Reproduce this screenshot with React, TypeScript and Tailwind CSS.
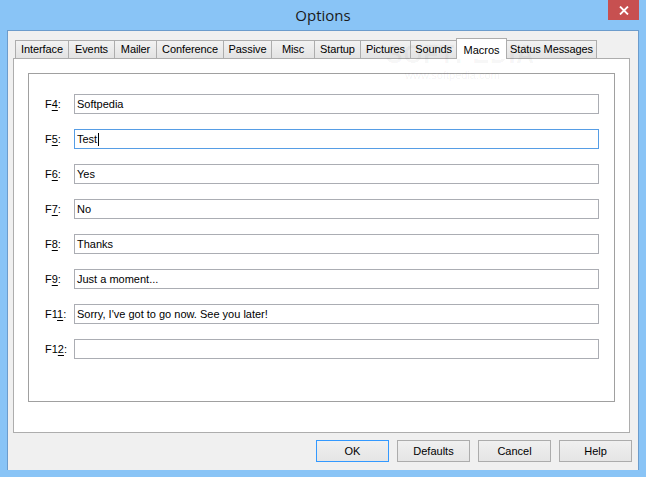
const tabs = [
  { name: "Interface", w: 54 },
  { name: "Events", w: 47 },
  { name: "Mailer", w: 43 },
  { name: "Conference", w: 68 },
  { name: "Passive", w: 49 },
  { name: "Misc", w: 44 },
  { name: "Startup", w: 47 },
  { name: "Pictures", w: 51 },
  { name: "Sounds", w: 47 },
  { name: "Macros", w: 51 },
  { name: "Status Messages", w: 91 },
];

const macros = [
  { key: "F", ul: "4", value: "Softpedia" },
  { key: "F", ul: "5", value: "Test", focused: true },
  { key: "F", ul: "6", value: "Yes" },
  { key: "F", ul: "7", value: "No" },
  { key: "F", ul: "8", value: "Thanks" },
  { key: "F", ul: "9", value: "Just a moment..." },
  { key: "F1", ul: "1", value: "Sorry, I've got to go now. See you later!" },
  { key: "F1", ul: "2", value: "" },
];

function Tab({ name, w, active }: { name: string; w: number; active: boolean }) {
  if (active) {
    return (
      <div
        style={{ width: w }}
        className="-ml-px relative z-10 h-[21px] -mb-px border border-b-0 border-[#adadad] bg-white flex items-start justify-center pt-[3px] text-[11px] text-black"
      >
        {name}
      </div>
    );
  }
  return (
    <div
      style={{ width: w }}
      className="-ml-px first:ml-0 h-[18px] border border-b-0 border-[#adadad] bg-gradient-to-b from-[#f2f2f2] to-[#e3e3e3] flex items-center justify-center text-[11px] tracking-[-0.1px] text-black"
    >
      {name}
    </div>
  );
}

function DlgButton({ label, primary }: { label: string; primary?: boolean }) {
  return (
    <button
      className={
        "w-[73px] h-[22px] border text-[11px] text-black bg-gradient-to-b from-[#f0f0f0] to-[#e5e5e5] " +
        (primary ? "border-[#3399ff]" : "border-[#acacac]")
      }
    >
      {label}
    </button>
  );
}

export default function App() {
  return (
    <div
      className="w-[646px] h-[477px] bg-[#89c4f6] flex flex-col overflow-hidden"
      style={{ fontFamily: '"Liberation Sans", Arial, sans-serif' }}
    >
      {/* title bar */}
      <div className="relative h-[30px] shrink-0 flex items-center justify-center">
        <span
          className="text-[15px] text-[#1a1a1a] mt-[1px]"
          style={{ fontFamily: '"Open Sans", "Noto Sans", sans-serif' }}
        >
          Options
        </span>
        <button className="absolute right-[7px] top-0 w-[31px] h-[20px] bg-[#c75050] flex items-center justify-center">
          <svg width="10" height="9" viewBox="0 0 10 9">
            <path d="M1 0.5 L9 8.5 M9 0.5 L1 8.5" stroke="white" strokeWidth="1.8" />
          </svg>
        </button>
      </div>

      {/* client area */}
      <div className="mx-[7px] h-[440px] border border-[#6c9ccc] border-b-0 bg-[#f0f0f0] flex flex-col relative">
        <div className="pl-[7px] pt-[7px] flex items-end">
          {tabs.map((t) => (
            <Tab key={t.name} name={t.name} w={t.w} active={t.name === "Macros"} />
          ))}
        </div>

        <div className="ml-[5px] w-[617px] h-[375px] border border-[#adadad] bg-white pt-[14px] px-[14px]">
          <div className="h-[329px] border border-[#a0a0a0] pt-[20px] pl-[16px] pr-[15px] flex flex-col gap-[15px]">
            {macros.map((m, i) => (
              <div key={i} className="flex items-center h-[20px]">
                <div className="w-[29px] text-[11px] text-black">
                  {m.key}
                  <span className="underline underline-offset-[2px]">{m.ul}</span>:
                </div>
                <div
                  className={
                    "flex-1 h-[20px] border flex items-center pl-[2px] text-[11px] text-black " +
                    (m.focused ? "border-[#569de5]" : "border-[#abadb3]")
                  }
                >
                  <span>{m.value}</span>
                  {m.focused && <span className="ml-px w-px h-[13px] bg-black" />}
                </div>
              </div>
            ))}
          </div>
        </div>

        <div className="flex justify-end gap-[8px] pr-[6px] pt-[7px]">
          <DlgButton label="OK" primary />
          <DlgButton label="Defaults" />
          <DlgButton label="Cancel" />
          <DlgButton label="Help" />
        </div>

        {/* watermark */}
        <div className="absolute left-[378px] top-[5px] text-[25px] font-bold tracking-wide text-black/[0.04] pointer-events-none">
          SOFTPEDIA
        </div>
        <div className="absolute left-[397px] top-[36px] text-[11px] text-black/[0.06] pointer-events-none">
          www.softpedia.com
        </div>
      </div>
    </div>
  );
}
